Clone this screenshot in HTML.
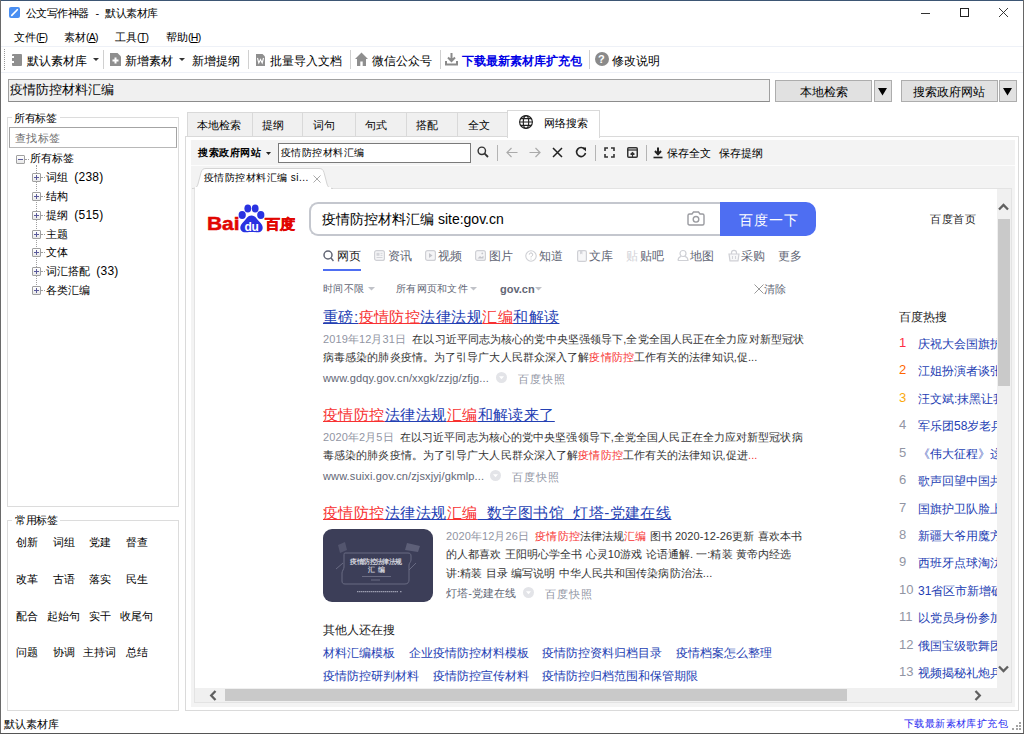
<!DOCTYPE html>
<html><head><meta charset="utf-8">
<style>
*{margin:0;padding:0;box-sizing:border-box}
html,body{width:1024px;height:734px;overflow:hidden;background:#fff;font-family:"Liberation Sans",sans-serif;color:#000}
.a{position:absolute}
.t{position:absolute;white-space:nowrap;line-height:16px;font-size:11px}
.p{font-size:10.5px;letter-spacing:-0.7px}
.sep{position:absolute;width:1px;background:#d0d0d0}
.btn{position:absolute;background:#e1e1e1;border:1px solid #adadad}
.tab{position:absolute;top:112px;height:25px;background:#f0f0f0;border:1px solid #d9d9d9;border-right:none}
.ex{position:absolute;width:9px;height:9px;border:1px solid #a0a0a0;border-radius:1px;background:linear-gradient(#fff,#e8e8e8)}
.ex:before{content:"";position:absolute;left:1px;top:3px;width:5px;height:1px;background:#5a5a9a}
.ex.pl:after{content:"";position:absolute;left:3px;top:1px;width:1px;height:5px;background:#5a5a9a}
.lk{color:#2440b3}
.rd{color:#f73131}
.gy{color:#9195a3}
.hs{position:absolute;left:899px;font-size:12px;line-height:16px;white-space:nowrap}
.hs b{font-weight:normal;display:inline-block;width:19px;font-size:13px;vertical-align:top;position:relative;top:-1px}
.hs span{color:#2440b3}
.ttl{font-size:15px;line-height:20px;letter-spacing:0.45px}
.ttl span{text-decoration:underline}
.bd{font-size:11px;color:#333;letter-spacing:0.1px}
.url{font-size:11px;color:#626675;letter-spacing:0.13px}
.snp{font-size:11px;color:#9195a3;letter-spacing:1px}
.rel{font-size:12px;color:#2440b3}
</style></head><body>
<!-- window borders -->
<div class="a" style="left:0;top:0;width:1024px;height:1px;background:#3d5674"></div>
<div class="a" style="left:0;top:0;width:1px;height:734px;background:#6a6a6a"></div>
<div class="a" style="left:1023px;top:0;width:1px;height:734px;background:#666"></div>
<div class="a" style="left:0;top:733px;width:1024px;height:1px;background:#555"></div>

<!-- title bar -->
<div class="a" style="left:9px;top:7px;width:11px;height:11px;background:#4a8ff2;border-radius:2px"></div>
<svg class="a" style="left:9px;top:7px" width="11" height="11"><path d="M2.8 8.3L7.6 3.5" stroke="#fff" stroke-width="1.7" stroke-linecap="round" fill="none"/><path d="M7.2 2.6L8.6 1.8L9.2 2.4L8.4 3.8Z" fill="#fff"/></svg>
<div class="t" style="left:26px;top:5px;font-size:11px;letter-spacing:-0.6px">公文写作神器<span style="margin:0 7px 0 7px">-</span>默认素材库</div>
<div class="a" style="left:921px;top:13px;width:9px;height:1px;background:#333"></div>
<div class="a" style="left:960px;top:8px;width:9px;height:9px;border:1px solid #222"></div>
<svg class="a" style="left:998px;top:7px" width="11" height="11"><path d="M1 1L10 10M10 1L1 10" stroke="#222" stroke-width="0.9"/></svg>

<!-- menu -->
<div class="t" style="left:14px;top:29px">文件<span class="p">(<u>F</u>)</span></div>
<div class="t" style="left:64px;top:29px">素材<span class="p">(<u>A</u>)</span></div>
<div class="t" style="left:115px;top:29px">工具<span class="p">(<u>T</u>)</span></div>
<div class="t" style="left:166px;top:29px">帮助<span class="p">(<u>H</u>)</span></div>

<!-- toolbar -->
<div class="a" style="left:1px;top:46px;width:1022px;height:1px;background:#eef1f7"></div>
<div class="a" style="left:1px;top:72px;width:1022px;height:1px;background:#eef1f7"></div>
<div class="a" style="left:4px;top:49px;width:1px;height:21px;border-left:1px dotted #999"></div>
<div class="a" style="left:12px;top:54px;width:10px;height:12px;background:#8f8f8f;border-radius:1px"></div>
<div class="a" style="left:12px;top:56px;width:2px;height:2px;background:#fff"></div><div class="a" style="left:12px;top:61px;width:2px;height:2px;background:#fff"></div>
<div class="t" style="left:27px;top:53px;font-size:12px">默认素材库</div>
<svg class="a" style="left:93px;top:58px" width="6" height="4"><path d="M0 0H6L3 3Z" fill="#333"/></svg>
<div class="sep" style="left:103px;top:50px;height:19px"></div>
<svg class="a" style="left:110px;top:53px" width="11" height="13"><path d="M0 0H7.5L11 3.5V13H0Z" fill="#8f8f8f"/><path d="M2.5 7.5H8.5M5.5 4.5V10.5" stroke="#fff" stroke-width="2"/></svg>
<div class="t" style="left:125px;top:53px;font-size:12px">新增素材</div>
<svg class="a" style="left:179px;top:58px" width="6" height="4"><path d="M0 0H6L3 3Z" fill="#333"/></svg>
<div class="t" style="left:192px;top:53px;font-size:12px">新增提纲</div>
<div class="sep" style="left:248px;top:50px;height:19px"></div>
<svg class="a" style="left:256px;top:54px" width="9" height="12"><path d="M0 0H6.5L9 2.5V12H0Z" fill="#8f8f8f"/><path d="M1.5 4L2.8 9L4.5 5.5L6.2 9L7.5 4" stroke="#fff" stroke-width="1.1" fill="none"/></svg>
<div class="t" style="left:270px;top:53px;font-size:12px">批量导入文档</div>
<div class="sep" style="left:350px;top:50px;height:19px"></div>
<svg class="a" style="left:355px;top:52px" width="13" height="14"><path d="M6.5 0.5L0 7H2V14H5.3V9.5H7.7V14H11V7H13Z" fill="#8f8f8f"/></svg>
<div class="t" style="left:372px;top:53px;font-size:12px">微信公众号</div>
<div class="sep" style="left:440px;top:50px;height:19px"></div>
<svg class="a" style="left:445px;top:52px" width="13" height="14"><path d="M6.5 1V9M3 5.5L6.5 9L10 5.5M1 9V12.5H12V9" stroke="#8a8a8a" stroke-width="2" fill="none"/></svg>
<div class="t" style="left:462px;top:53px;font-size:12px;color:#0000e6;font-weight:bold">下载最新素材库扩充包</div>
<div class="sep" style="left:589px;top:50px;height:19px"></div>
<div class="a" style="left:595px;top:52px;width:14px;height:14px;border-radius:50%;background:#8a8a8a"></div>
<div class="t" style="left:598px;top:51px;font-size:11px;color:#fff;font-weight:bold">?</div>
<div class="t" style="left:612px;top:53px;font-size:12px">修改说明</div>

<!-- search row -->
<div class="a" style="left:8px;top:79px;width:762px;height:23px;background:#f0f0f0;border:1px solid #a0a0a0;border-bottom-color:#8c8c8c"></div>
<div class="t" style="left:10px;top:82px;font-size:12.7px">疫情防控材料汇编</div>
<div class="btn" style="left:775px;top:80px;width:97px;height:22px"></div>
<div class="t" style="left:800px;top:84px;font-size:12px">本地检索</div>
<div class="btn" style="left:874px;top:80px;width:18px;height:22px"></div>
<svg class="a" style="left:878px;top:88px" width="9" height="8"><path d="M0 0H9L4.5 7.5Z" fill="#000"/></svg>
<div class="btn" style="left:901px;top:80px;width:97px;height:22px"></div>
<div class="t" style="left:913px;top:84px;font-size:12px">搜索政府网站</div>
<div class="btn" style="left:999px;top:80px;width:18px;height:22px"></div>
<svg class="a" style="left:1003px;top:88px" width="9" height="8"><path d="M0 0H9L4.5 7.5Z" fill="#000"/></svg>

<!-- left panel group 1 -->
<div class="a" style="left:7px;top:117px;width:172px;height:390px;border:1px solid #dcdcdc"></div>
<div class="a" style="left:12px;top:112px;width:48px;height:12px;background:#fff"></div>
<div class="t" style="left:14px;top:110px;letter-spacing:-0.4px">所有标签</div>
<div class="a" style="left:9px;top:127px;width:168px;height:21px;border:1px solid #a4a4a4;border-bottom-color:#b8b8b8;background:#fff"></div>
<div class="t" style="left:15px;top:130px;font-size:11px;letter-spacing:0.3px;color:#6e6e6e">查找标签</div>
<div class="ex" style="left:16px;top:155px"></div>
<div class="a" style="left:25px;top:159px;width:4px;height:1px;border-top:1px dotted #a0a0a0"></div>
<div class="t" style="left:30px;top:150px">所有标签</div>
<div class="a" style="left:36px;top:165px;width:1px;height:126px;border-left:1px dotted #a0a0a0"></div>
<div class="ex pl" style="left:32px;top:173px"></div><div class="a" style="left:41px;top:177px;width:4px;border-top:1px dotted #a0a0a0"></div><div class="t" style="left:46px;top:169px">词组 &nbsp;<span style="font-size:12px;letter-spacing:0.3px">(238)</span></div>
<div class="ex pl" style="left:32px;top:192px"></div><div class="a" style="left:41px;top:196px;width:4px;border-top:1px dotted #a0a0a0"></div><div class="t" style="left:46px;top:188px">结构</div>
<div class="ex pl" style="left:32px;top:211px"></div><div class="a" style="left:41px;top:215px;width:4px;border-top:1px dotted #a0a0a0"></div><div class="t" style="left:46px;top:207px">提纲 &nbsp;<span style="font-size:12px;letter-spacing:0.3px">(515)</span></div>
<div class="ex pl" style="left:32px;top:230px"></div><div class="a" style="left:41px;top:234px;width:4px;border-top:1px dotted #a0a0a0"></div><div class="t" style="left:46px;top:226px">主题</div>
<div class="ex pl" style="left:32px;top:248px"></div><div class="a" style="left:41px;top:252px;width:4px;border-top:1px dotted #a0a0a0"></div><div class="t" style="left:46px;top:244px">文体</div>
<div class="ex pl" style="left:32px;top:267px"></div><div class="a" style="left:41px;top:271px;width:4px;border-top:1px dotted #a0a0a0"></div><div class="t" style="left:46px;top:263px">词汇搭配 &nbsp;<span style="font-size:12px;letter-spacing:0.3px">(33)</span></div>
<div class="ex pl" style="left:32px;top:286px"></div><div class="a" style="left:41px;top:290px;width:4px;border-top:1px dotted #a0a0a0"></div><div class="t" style="left:46px;top:282px">各类汇编</div>

<!-- left panel group 2 -->
<div class="a" style="left:7px;top:520px;width:172px;height:191px;border:1px solid #dcdcdc"></div>
<div class="a" style="left:12px;top:514px;width:48px;height:12px;background:#fff"></div>
<div class="t" style="left:15px;top:512px;font-size:11px;letter-spacing:-0.3px">常用标签</div>
<div class="t" style="left:16px;top:534px">创新</div><div class="t" style="left:53px;top:534px">词组</div><div class="t" style="left:89px;top:534px">党建</div><div class="t" style="left:126px;top:534px">督查</div>
<div class="t" style="left:16px;top:571px">改革</div><div class="t" style="left:53px;top:571px">古语</div><div class="t" style="left:89px;top:571px">落实</div><div class="t" style="left:126px;top:571px">民生</div>
<div class="t" style="left:16px;top:608px">配合</div><div class="t" style="left:47px;top:608px">起始句</div><div class="t" style="left:89px;top:608px">实干</div><div class="t" style="left:120px;top:608px">收尾句</div>
<div class="t" style="left:16px;top:644px">问题</div><div class="t" style="left:53px;top:644px">协调</div><div class="t" style="left:83px;top:644px">主持词</div><div class="t" style="left:126px;top:644px">总结</div>

<!-- status bar -->
<div class="t" style="left:4px;top:716px;font-size:10.5px">默认素材库</div>
<div class="t" style="left:904px;top:716px;font-size:10px;letter-spacing:0.4px;color:#2a2af0">下载最新素材库扩充包</div>
<div class="a" style="left:1019px;top:722px;width:2px;height:2px;background:#a4a4a4"></div><div class="a" style="left:1016px;top:725px;width:2px;height:2px;background:#a4a4a4"></div><div class="a" style="left:1019px;top:725px;width:2px;height:2px;background:#a4a4a4"></div><div class="a" style="left:1012px;top:728px;width:2px;height:2px;background:#a4a4a4"></div><div class="a" style="left:1016px;top:728px;width:2px;height:2px;background:#a4a4a4"></div><div class="a" style="left:1019px;top:728px;width:2px;height:2px;background:#a4a4a4"></div>

<!-- tab control -->
<div class="a" style="left:185px;top:136px;width:834px;height:575px;border:1px solid #dadada;background:#fff"></div>
<div class="tab" style="left:187px;width:66px"></div><div class="t" style="left:197px;top:117px">本地检索</div>
<div class="tab" style="left:252px;width:51px"></div><div class="t" style="left:262px;top:117px">提纲</div>
<div class="tab" style="left:302px;width:54px"></div><div class="t" style="left:313px;top:117px">词句</div>
<div class="tab" style="left:355px;width:52px"></div><div class="t" style="left:365px;top:117px">句式</div>
<div class="tab" style="left:406px;width:52px"></div><div class="t" style="left:416px;top:117px">搭配</div>
<div class="tab" style="left:457px;width:51px"></div><div class="t" style="left:468px;top:117px">全文</div>
<div class="a" style="left:507px;top:110px;width:93px;height:28px;background:#fff;border:1px solid #d9d9d9;border-bottom:none"></div>
<svg class="a" style="left:518px;top:114px" width="16" height="16"><g stroke="#222" stroke-width="1.15" fill="none"><circle cx="8" cy="8" r="6.4"/><ellipse cx="8" cy="8" rx="2.7" ry="6.4"/><path d="M1.6 8H14.4M2.8 4.6H13.2M2.8 11.4H13.2"/></g></svg>
<div class="t" style="left:544px;top:115px;font-size:11px">网络搜索</div>

<!-- inner toolbar -->
<div class="a" style="left:191px;top:140px;width:824px;height:567px;background:#f3f3f3"></div>
<div class="a" style="left:191px;top:165px;width:824px;height:1px;background:#fcfcfc"></div>
<div class="t" style="left:198px;top:145px;font-weight:bold;font-size:10px;letter-spacing:0.5px">搜索政府网站</div>
<svg class="a" style="left:266px;top:152px" width="5" height="3"><path d="M0 0H5L2.5 3Z" fill="#222"/></svg>
<div class="a" style="left:278px;top:143px;width:193px;height:20px;background:#fff;border:1px solid #7a7a7a"></div>
<div class="t" style="left:281px;top:145px;font-size:10px;letter-spacing:0.45px">疫情防控材料汇编</div>
<svg class="a" style="left:477px;top:146px" width="12" height="12"><circle cx="4.8" cy="4.8" r="3.7" stroke="#333" stroke-width="1.4" fill="none"/><path d="M7.4 7.4L11 11" stroke="#333" stroke-width="1.8"/></svg>
<div class="sep" style="left:497px;top:145px;height:16px;background:#b4b4b4"></div>
<svg class="a" style="left:506px;top:147px" width="12" height="11"><path d="M11.5 5.5H1M5.5 1L1 5.5L5.5 10" stroke="#aaa" stroke-width="1.2" fill="none"/></svg>
<svg class="a" style="left:529px;top:147px" width="12" height="11"><path d="M0.5 5.5H11M6.5 1L11 5.5L6.5 10" stroke="#aaa" stroke-width="1.2" fill="none"/></svg>
<svg class="a" style="left:552px;top:147px" width="11" height="11"><path d="M1 1L10 10M10 1L1 10" stroke="#222" stroke-width="1.5"/></svg>
<svg class="a" style="left:575px;top:146px" width="12" height="12"><path d="M9.8 3.5A4.5 4.5 0 1 0 10.5 7" stroke="#222" stroke-width="1.6" fill="none"/><path d="M7 1.5H11V5.5Z" fill="#222"/></svg>
<div class="sep" style="left:595px;top:145px;height:16px;background:#b4b4b4"></div>
<svg class="a" style="left:604px;top:147px" width="11" height="11"><path d="M1 4V1H4M7 1H10V4M10 7V10H7M4 10H1V7" stroke="#333" stroke-width="1.6" fill="none"/></svg>
<svg class="a" style="left:627px;top:147px" width="11" height="11"><rect x="0.75" y="0.75" width="9.5" height="9.5" rx="1" stroke="#333" stroke-width="1.5" fill="none"/><path d="M1 3H10" stroke="#333" stroke-width="1.3"/><path d="M5.5 10V5.5M3.5 7.5L5.5 5.5L7.5 7.5" stroke="#333" stroke-width="1.2" fill="none"/></svg>
<div class="sep" style="left:646px;top:145px;height:16px;background:#b4b4b4"></div>
<svg class="a" style="left:653px;top:147px" width="10" height="12"><path d="M5 0.5V7M2 4L5 7.3L8 4" stroke="#222" stroke-width="2" fill="none"/><path d="M0.5 10.5H9.5" stroke="#222" stroke-width="1.6"/></svg>
<div class="t" style="left:667px;top:145px;font-size:10.5px">保存全文</div>
<div class="t" style="left:719px;top:145px;font-size:10.5px">保存提纲</div>

<!-- browser content -->
<div class="a" style="left:194px;top:188px;width:818px;height:515px;background:#fff;border:1px solid #e3e3e3"></div>
<!-- browser tab strip -->
<svg class="a" style="left:190px;top:166px" width="150" height="25"><path d="M2 22.5C5 22.5 7 21.5 8 18L11 6.5C12 3.5 13 2.5 16 2.5H129C132 2.5 133 3.5 134 6.5L137 18C138 21.5 140 22.5 143 22.5" stroke="#d4d4d4" stroke-width="1" fill="#fff"/><rect x="5" y="21" width="136" height="4" fill="#fff"/></svg>
<div class="t" style="left:204px;top:170px;font-size:10px;letter-spacing:0.45px">疫情防控材料汇编 si...</div>
<svg class="a" style="left:313px;top:175px" width="8" height="8"><path d="M0.5 0.5L7.5 7.5M7.5 0.5L0.5 7.5" stroke="#aaa" stroke-width="1"/></svg>

<div class="a" style="left:195px;top:189px;width:816px;height:513px;overflow:hidden">
 <div class="a" style="left:-195px;top:-189px;width:1024px;height:734px">
  <!-- baidu logo -->
  <div class="t" style="left:207px;top:212px;font-size:19px;line-height:24px;font-weight:bold;color:#e10601;-webkit-text-stroke:0.5px #e10601;transform:scaleX(1.1);transform-origin:0 0">Bai</div>
  <svg class="a" style="left:237px;top:204px" width="29" height="29">
   <g fill="#2932e1"><ellipse cx="5.2" cy="11" rx="3.6" ry="4"/><ellipse cx="10.8" cy="4.6" rx="3.4" ry="4"/><ellipse cx="18.2" cy="4.6" rx="3.4" ry="4"/><ellipse cx="23.8" cy="11" rx="3.6" ry="4"/>
   <path d="M14.5 11.5C10.5 11.5 9.5 15 6.8 17.6C4.2 20.2 2.6 22.5 3.6 25.5C4.6 28.3 7.6 28.6 10 28.2C12 27.8 17 27.8 19 28.2C21.4 28.6 24.4 28.3 25.4 25.5C26.4 22.5 24.8 20.2 22.2 17.6C19.5 15 18.5 11.5 14.5 11.5Z"/></g>
   <text x="14.5" y="26.5" font-size="12" font-weight="bold" fill="#fff" text-anchor="middle" font-family="Liberation Sans" letter-spacing="-0.4">du</text>
  </svg>
  <div class="t" style="left:265px;top:211px;font-size:16px;line-height:24px;font-weight:bold;color:#e10601;-webkit-text-stroke:0.6px #e10601;transform:scale(0.95,0.88);transform-origin:0 100%">百度</div>
  <!-- search box -->
  <div class="a" style="left:309px;top:202px;width:420px;height:34px;border:2px solid #c4c7ce;border-radius:9px 0 0 9px;border-right:none;background:#fff"></div>
  <div class="t" style="left:322px;top:211px;font-size:14px">疫情防控材料汇编 site:gov.cn</div>
  <svg class="a" style="left:687px;top:211px" width="18" height="15"><path d="M1 4.5C1 3.5 1.5 3 2.5 3H5L6.5 1H11.5L13 3H15.5C16.5 3 17 3.5 17 4.5V12.5C17 13.5 16.5 14 15.5 14H2.5C1.5 14 1 13.5 1 12.5Z" stroke="#9a9ba0" stroke-width="1.4" fill="none"/><circle cx="9" cy="8.3" r="2.8" stroke="#9a9ba0" stroke-width="1.4" fill="none"/></svg>
  <div class="a" style="left:720px;top:202px;width:96px;height:34px;background:#4e6ef2;border-radius:0 10px 10px 0"></div>
  <div class="t" style="left:739px;top:212px;font-size:14px;letter-spacing:1.1px;color:#fff">百度一下</div>
  <div class="t" style="left:930px;top:211px;font-size:11px;letter-spacing:0.6px;color:#222">百度首页</div>
  <!-- nav -->
  <svg class="a" style="left:323px;top:250px" width="11" height="12"><circle cx="5" cy="5" r="4" stroke="#626675" stroke-width="1.5" fill="none"/><path d="M8 8L10.5 11" stroke="#626675" stroke-width="1.5"/></svg>
  <div class="t" style="left:337px;top:248px;font-size:12px;color:#222">网页</div>
  <div class="a" style="left:323px;top:269px;width:38px;height:2px;background:#4e6ef2"></div>
  <svg class="a" style="left:374px;top:250px" width="11" height="11"><rect x="0.6" y="0.6" width="9.8" height="9.8" rx="2" stroke="#cfd0d5" stroke-width="1.2" fill="#f5f5f7"/><rect x="2.5" y="2.8" width="3" height="3" fill="#d3d4d9"/><path d="M6.5 3.3H8.5M6.5 5.3H8.5M2.5 7.5H8.5" stroke="#d3d4d9" stroke-width="1"/></svg>
  <div class="t" style="left:388px;top:248px;font-size:12px;color:#626675">资讯</div>
  <svg class="a" style="left:425px;top:250px" width="11" height="11"><rect x="0.6" y="0.6" width="9.8" height="9.8" rx="2" stroke="#cfd0d5" stroke-width="1.2" fill="#f5f5f7"/><path d="M4 3L7.5 5.5L4 8Z" fill="#c4c5cb"/></svg>
  <div class="t" style="left:438px;top:248px;font-size:12px;color:#626675">视频</div>
  <svg class="a" style="left:475px;top:250px" width="11" height="11"><rect x="0.6" y="0.6" width="9.8" height="9.8" rx="2" stroke="#cfd0d5" stroke-width="1.2" fill="#f5f5f7"/><path d="M2.5 8.5L5 6L6.5 7.3L8.5 5.8V8.5Z" fill="#c4c5cb"/><circle cx="7.3" cy="3.4" r="0.9" fill="#c4c5cb"/></svg>
  <div class="t" style="left:489px;top:248px;font-size:12px;color:#626675">图片</div>
  <svg class="a" style="left:525px;top:250px" width="12" height="12"><circle cx="6" cy="6" r="5.2" stroke="#cfd0d5" stroke-width="1.1" fill="none"/><path d="M4.3 4.6A1.7 1.7 0 1 1 6.6 6.2C6.1 6.5 6 6.8 6 7.4" stroke="#c4c5cb" stroke-width="1" fill="none"/><circle cx="6" cy="9" r="0.6" fill="#c4c5cb"/></svg>
  <div class="t" style="left:539px;top:248px;font-size:12px;color:#626675">知道</div>
  <svg class="a" style="left:577px;top:250px" width="10" height="12"><rect x="0.6" y="0.6" width="8.8" height="10.8" rx="1.5" stroke="#cfd0d5" stroke-width="1.2" fill="#f7f7f8"/><path d="M3 0.8V4.5L4.2 3.6L5.4 4.5V0.8" fill="#d3d4d9"/></svg>
  <div class="t" style="left:589px;top:248px;font-size:12px;color:#626675">文库</div>
  <div class="t" style="left:626px;top:248px;font-size:12px;color:#d2d3d8">贴</div>
  <div class="t" style="left:640px;top:248px;font-size:12px;color:#626675">贴吧</div>
  <svg class="a" style="left:677px;top:249px" width="12" height="13"><circle cx="6" cy="4.5" r="3" stroke="#cfd0d5" stroke-width="1.2" fill="none"/><path d="M1 11.5C1 8.8 3 7.6 4.2 7.2M7.8 7.2C9 7.6 11 8.8 11 11.5H1" stroke="#cfd0d5" stroke-width="1.2" fill="none"/></svg>
  <div class="t" style="left:690px;top:248px;font-size:12px;color:#626675">地图</div>
  <svg class="a" style="left:728px;top:249px" width="12" height="13"><path d="M3.5 5V3.8A2.5 2.5 0 0 1 8.5 3.8V5" stroke="#cfd0d5" stroke-width="1.2" fill="none"/><path d="M1 5H11L10 11.8H2Z" stroke="#cfd0d5" stroke-width="1.2" fill="#f7f7f8"/><path d="M4.5 7V10M7.5 7V10" stroke="#d3d4d9" stroke-width="1"/></svg>
  <div class="t" style="left:741px;top:248px;font-size:12px;color:#626675">采购</div>
  <div class="t" style="left:778px;top:248px;font-size:12px;color:#626675">更多</div>
  <!-- filters -->
  <div class="t" style="left:323px;top:281px;font-size:10px;letter-spacing:0.35px;color:#626675">时间不限</div>
  <svg class="a" style="left:368px;top:287px" width="7" height="4"><path d="M0 0H7L3.5 3.5Z" fill="#c0c2c8"/></svg>
  <div class="t" style="left:396px;top:281px;font-size:10px;letter-spacing:0.3px;color:#626675">所有网页和文件</div>
  <svg class="a" style="left:470px;top:287px" width="7" height="4"><path d="M0 0H7L3.5 3.5Z" fill="#c0c2c8"/></svg>
  <div class="t" style="left:500px;top:281px;font-size:11px;color:#626675;font-weight:bold">gov.cn</div>
  <svg class="a" style="left:535px;top:287px" width="7" height="4"><path d="M0 0H7L3.5 3.5Z" fill="#c0c2c8"/></svg>
  <svg class="a" style="left:754px;top:284px" width="10" height="10"><path d="M0.5 0.5L9.5 9.5M9.5 0.5L0.5 9.5" stroke="#999" stroke-width="1"/></svg>
  <div class="t" style="left:764px;top:281px;font-size:10.5px;color:#626675">清除</div>

  <!-- result 1 -->
  <div class="t ttl" style="left:323px;top:307px"><span class="lk">重磅:</span><span class="rd">疫情防控</span><span class="lk">法律法规</span><span class="rd">汇编</span><span class="lk">和解读</span></div>
  <div class="t bd" style="left:323px;top:331px"><span class="gy">2019年12月31日</span>&nbsp; 在以习近平同志为核心的党中央坚强领导下,全党全国人民正在全力应对新型冠状</div>
  <div class="t bd" style="left:323px;top:349px">病毒感染的肺炎疫情。为了引导广大人民群众深入了解<span class="rd">疫情防控</span>工作有关的法律知识,促...</div>
  <div class="t url" style="left:323px;top:369.5px">www.gdqy.gov.cn/xxgk/zzjg/zfjg...</div>
  <svg class="a" style="left:496px;top:372px" width="11" height="11"><circle cx="5.5" cy="5.5" r="5.5" fill="#e3e4e8"/><path d="M3 4.2H8L5.5 7.2Z" fill="#fff"/></svg>
  <div class="t snp" style="left:518px;top:371px">百度快照</div>

  <!-- result 2 -->
  <div class="t ttl" style="left:323px;top:405px"><span class="rd">疫情防控</span><span class="lk">法律法规</span><span class="rd">汇编</span><span class="lk">和解读来了</span></div>
  <div class="t bd" style="left:323px;top:429px"><span class="gy">2020年2月5日</span>&nbsp; 在以习近平同志为核心的党中央坚强领导下,全党全国人民正在全力应对新型冠状病</div>
  <div class="t bd" style="left:323px;top:447px">毒感染的肺炎疫情。为了引导广大人民群众深入了解<span class="rd">疫情防控</span>工作有关的法律知识,促进<span class="rd">...</span></div>
  <div class="t url" style="left:323px;top:467.5px">www.suixi.gov.cn/zjsxjyj/gkmlp...</div>
  <svg class="a" style="left:490px;top:470px" width="11" height="11"><circle cx="5.5" cy="5.5" r="5.5" fill="#e3e4e8"/><path d="M3 4.2H8L5.5 7.2Z" fill="#fff"/></svg>
  <div class="t snp" style="left:512px;top:469px">百度快照</div>

  <!-- result 3 -->
  <div class="t ttl" style="left:323px;top:503px"><span class="rd">疫情防控</span><span class="lk">法律法规</span><span class="rd">汇编</span><span class="lk">&nbsp;&nbsp;数字图书馆&nbsp;&nbsp;灯塔-党建在线</span></div>
  <div class="a" style="left:323px;top:529px;width:110px;height:73px;background:#3c3e58;border-radius:9px;overflow:hidden">
   <svg width="110" height="73" style="display:block">
   <g stroke="#6e7088" stroke-width="0.9" fill="none">
    <path d="M22 24H85C87 24 88 25 88 27V31C88 33 86 34 86 36V51C86 53 85 55 82 55H22C20 55 19 54 19 52V44C19 42 21 40 21 38V27C21 25 21 24 22 24Z"/>
    <path d="M13 40L20 34M93 34L86 41"/>
   </g>
   <g fill="#5d5f78"><path d="M84 14L97 17L95 23L82 21Z"/><path d="M15 16L22 13L24 21L17 24Z" opacity="0.7"/></g>
   <text x="53" y="34.5" font-size="7" fill="#cfd0da" text-anchor="middle" font-family="Liberation Serif" font-weight="bold" letter-spacing="-0.6">疫情防控法律法规</text>
   <text x="53.5" y="43" font-size="6.5" fill="#cfd0da" text-anchor="middle" font-family="Liberation Serif" font-weight="bold">汇&#160;&#160;编</text>
   <path d="M39 47.5H68" stroke="#7d7f95" stroke-width="0.7"/><path d="M48 51H57" stroke="#7d7f95" stroke-width="0.7"/>
   <path d="M34 62.7H75M77 62.7H79" stroke="#9a9caf" stroke-width="1.2" stroke-dasharray="1.5 0.5"/>
   </svg>
  </div>
  <div class="t bd" style="left:446px;top:528px"><span class="gy">2020年12月26日</span>&nbsp; <span class="rd">疫情防控</span>法律法规<span class="rd">汇编</span> 图书 2020-12-26更新 喜欢本书</div>
  <div class="t bd" style="left:446px;top:546px">的人都喜欢 王阳明心学全书 心灵10游戏 论语通解. 一:精装 黄帝内经选</div>
  <div class="t bd" style="left:446px;top:565px">讲:精装 目录 编写说明 中华人民共和国传染病防治法...</div>
  <div class="t url" style="left:446px;top:585px">灯塔-党建在线</div>
  <svg class="a" style="left:523px;top:587px" width="11" height="11"><circle cx="5.5" cy="5.5" r="5.5" fill="#e3e4e8"/><path d="M3 4.2H8L5.5 7.2Z" fill="#fff"/></svg>
  <div class="t snp" style="left:545px;top:586px">百度快照</div>

  <!-- related -->
  <div class="t rel" style="left:323px;top:622px;color:#222">其他人还在搜</div>
  <div class="t rel" style="left:323px;top:645px">材料汇编模板</div>
  <div class="t rel" style="left:409px;top:645px">企业疫情防控材料模板</div>
  <div class="t rel" style="left:542px;top:645px">疫情防控资料归档目录</div>
  <div class="t rel" style="left:676px;top:645px">疫情档案怎么整理</div>
  <div class="t rel" style="left:323px;top:668px">疫情防控研判材料</div>
  <div class="t rel" style="left:433px;top:668px">疫情防控宣传材料</div>
  <div class="t rel" style="left:542px;top:668px">疫情防控归档范围和保管期限</div>

  <!-- hot search -->
  <div class="t" style="left:899px;top:309px;font-size:12px;color:#222">百度热搜</div>
  <div class="hs" style="top:336px"><b style="color:#fe2d46">1</b><span>庆祝大会国旗护卫</span></div>
  <div class="hs" style="top:363px"><b style="color:#f60">2</b><span>江姐扮演者谈张</span></div>
  <div class="hs" style="top:391px"><b style="color:#faa90e">3</b><span>汪文斌:抹黑让我</span></div>
  <div class="hs" style="top:418px"><b style="color:#9195a3">4</b><span>军乐团58岁老兵</span></div>
  <div class="hs" style="top:446px"><b style="color:#9195a3">5</b><span>《伟大征程》这</span></div>
  <div class="hs" style="top:473px"><b style="color:#9195a3">6</b><span>歌声回望中国共</span></div>
  <div class="hs" style="top:501px"><b style="color:#9195a3">7</b><span>国旗护卫队脸上</span></div>
  <div class="hs" style="top:528px"><b style="color:#9195a3">8</b><span>新疆大爷用魔方</span></div>
  <div class="hs" style="top:555px"><b style="color:#9195a3">9</b><span>西班牙点球淘汰</span></div>
  <div class="hs" style="top:583px"><b style="color:#9195a3">10</b><span>31省区市新增确</span></div>
  <div class="hs" style="top:610px"><b style="color:#9195a3">11</b><span>以党员身份参加</span></div>
  <div class="hs" style="top:638px"><b style="color:#9195a3">12</b><span>俄国宝级歌舞团</span></div>
  <div class="hs" style="top:665px"><b style="color:#9195a3">13</b><span>视频揭秘礼炮兵</span></div>
 </div>
 <!-- scrollbars (local coords) -->
 <div class="a" style="left:802px;top:0;width:14px;height:499px;background:#f0f0f0"></div>
 <div class="a" style="left:803px;top:30px;width:12px;height:167px;background:#c9c9c9"></div>
 <svg class="a" style="left:803px;top:14px" width="11" height="8"><path d="M1 6.5L5.5 2L10 6.5" stroke="#606060" stroke-width="2.3" fill="none"/></svg>
 <svg class="a" style="left:803px;top:476px" width="11" height="8"><path d="M1 1.5L5.5 6L10 1.5" stroke="#606060" stroke-width="2.3" fill="none"/></svg>
 <div class="a" style="left:0;top:499px;width:816px;height:14px;background:#f0f0f0"></div>
 <div class="a" style="left:30px;top:500px;width:622px;height:12px;background:#c9c9c9"></div>
 <svg class="a" style="left:14px;top:501px" width="8" height="11"><path d="M6.5 1L2.2 5.5L6.5 10" stroke="#606060" stroke-width="2.3" fill="none"/></svg>
 <svg class="a" style="left:779px;top:501px" width="8" height="11"><path d="M1.5 1L5.8 5.5L1.5 10" stroke="#606060" stroke-width="2.3" fill="none"/></svg>
</div>
</body></html>
